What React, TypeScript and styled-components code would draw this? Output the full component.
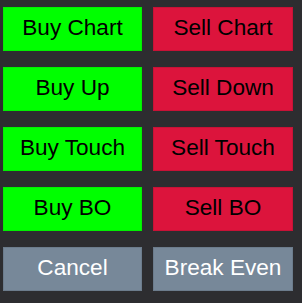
import React from 'react';
import styled, { createGlobalStyle } from 'styled-components';

const GlobalStyle = createGlobalStyle`
  html, body {
    margin: 0;
    padding: 0;
    background: #2d2d30;
  }
`;

const Panel = styled.div`
  display: grid;
  grid-template-columns: 139px 140px;
  grid-auto-rows: 44px;
  column-gap: 11px;
  row-gap: 16px;
  padding: 7px 0 0 3px;
  width: 302px;
  height: 303px;
  box-sizing: border-box;
  background: #2d2d30;
`;

type Kind = 'buy' | 'sell' | 'neutral';

const colors: Record<Kind, { bg: string; fg: string; border: string }> = {
  buy: { bg: '#00ff00', fg: '#000000', border: '#00f000' },
  sell: { bg: '#dc143c', fg: '#000000', border: '#c81236' },
  neutral: { bg: '#778899', fg: '#ffffff', border: '#6c7c8c' },
};

const ActionButton = styled.button<{ $kind: Kind }>`
  display: flex;
  align-items: center;
  justify-content: center;
  margin: 0;
  padding: 0 0 2px;
  box-sizing: border-box;
  border: 1px solid ${(p) => colors[p.$kind].border};
  border-radius: 0;
  background: ${(p) => colors[p.$kind].bg};
  color: ${(p) => colors[p.$kind].fg};
  font-family: 'Liberation Sans', Arial, sans-serif;
  font-size: 22.6px;
  cursor: pointer;
`;

const buttons: { label: string; kind: Kind }[] = [
  { label: 'Buy Chart', kind: 'buy' },
  { label: 'Sell Chart', kind: 'sell' },
  { label: 'Buy Up', kind: 'buy' },
  { label: 'Sell Down', kind: 'sell' },
  { label: 'Buy Touch', kind: 'buy' },
  { label: 'Sell Touch', kind: 'sell' },
  { label: 'Buy BO', kind: 'buy' },
  { label: 'Sell BO', kind: 'sell' },
  { label: 'Cancel', kind: 'neutral' },
  { label: 'Break Even', kind: 'neutral' },
];

export default function App() {
  return (
    <>
      <GlobalStyle />
      <Panel>
        {buttons.map((b) => (
          <ActionButton key={b.label} $kind={b.kind}>
            {b.label}
          </ActionButton>
        ))}
      </Panel>
    </>
  );
}
